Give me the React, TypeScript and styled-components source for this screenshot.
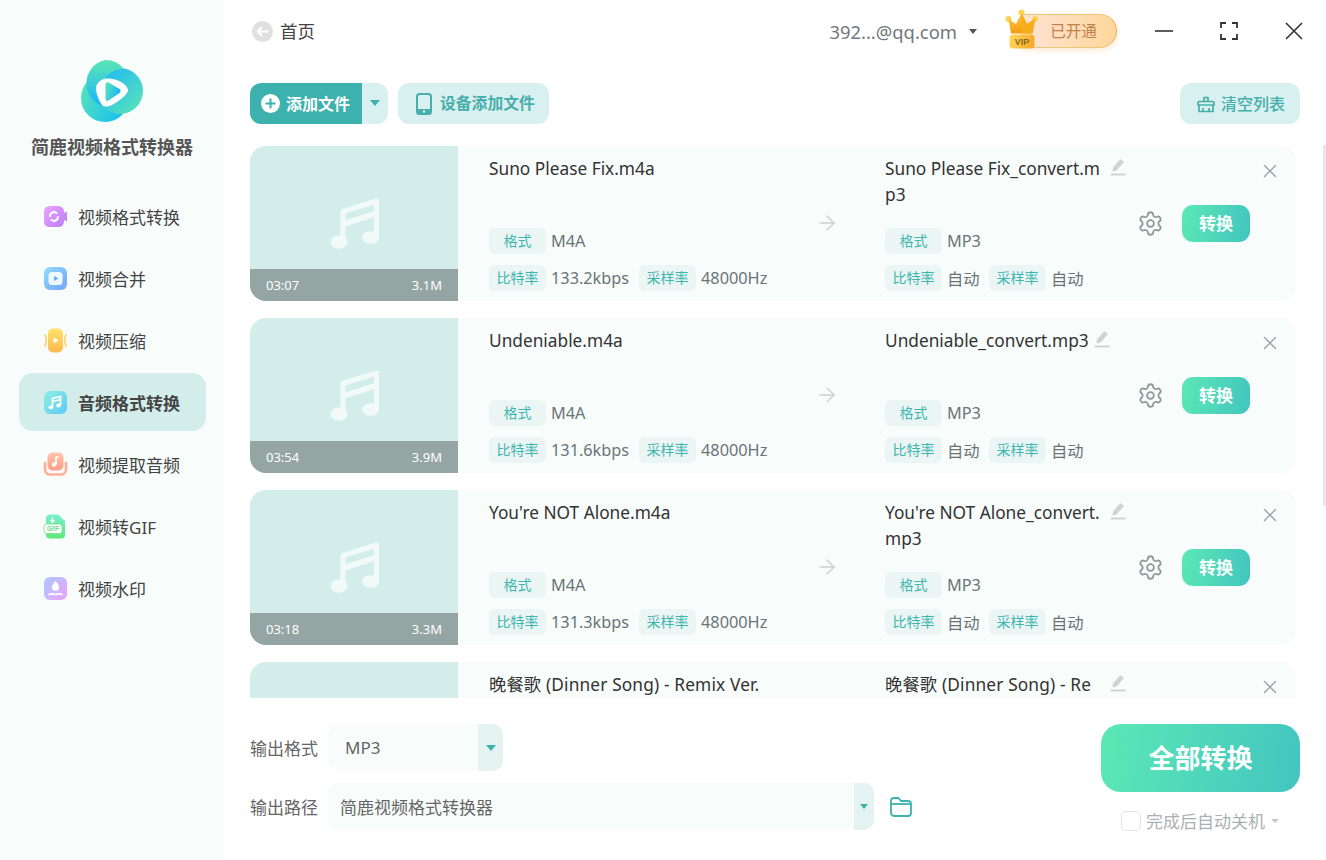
import React from "react";
import styled, { createGlobalStyle } from "styled-components";
import { ArrowRight, Settings, X } from "lucide-react";

const Global = createGlobalStyle`
  html, body { margin: 0; padding: 0; background: #fff; }
  body { font-family: "Noto Sans", "Noto Sans CJK SC", sans-serif; color: #333; overflow: hidden; }
  * { box-sizing: border-box; }
`;

const Page = styled.div`
  display: flex;
  width: 1326px;
  height: 860px;
  overflow: hidden;
  position: relative;
`;

const Sidebar = styled.aside`
  width: 224px;
  flex: none;
  background: #f8fcfb;
  display: flex;
  flex-direction: column;
  align-items: center;
  padding-top: 60px;
`;
const LogoMark = styled.svg`
  width: 62px;
  height: 62px;
  display: block;
`;
const AppName = styled.div`
  margin-top: 12px;
  font-size: 18px;
  line-height: 26px;
  font-weight: 700;
  color: #555;
`;
const Nav = styled.nav`
  margin-top: 27px;
  width: 187px;
  margin-left: 1px;
  display: flex;
  flex-direction: column;
  gap: 4px;
`;
const NavItem = styled.div<{ $active?: boolean }>`
  height: 58px;
  display: flex;
  align-items: center;
  gap: 10px;
  padding-left: 24px;
  border-radius: 14px;
  font-size: 17px;
  color: #444;
  font-weight: ${(p) => (p.$active ? 700 : 400)};
  background: ${(p) => (p.$active ? "#d3edeb" : "transparent")};
`;
const NavIcon = styled.svg`
  width: 25px;
  height: 25px;
  flex: none;
  display: block;
`;

const Main = styled.main`
  flex: 1;
  min-width: 0;
  display: flex;
  flex-direction: column;
  padding: 0 26px;
`;

const Header = styled.header`
  height: 62px;
  flex: none;
  display: flex;
  align-items: center;
  margin-right: -3px;
  padding-left: 2px;
`;
const BackCircle = styled.span`
  width: 21px;
  height: 21px;
  border-radius: 50%;
  background: #e0e0e0;
  display: flex;
  align-items: center;
  justify-content: center;
`;
const HomeLabel = styled.span`
  margin-left: 7px;
  padding-bottom: 2px;
  font-size: 17.5px;
  color: #444;
`;
const Spacer = styled.div`
  flex: 1;
`;
const Email = styled.span`
  font-size: 18.4px;
  color: #71787b;
`;
const Caret = styled.span<{ $color?: string; $w?: number; $h?: number }>`
  display: block;
  flex: none;
  width: 0;
  height: 0;
  border-left: ${(p) => p.$w ?? 5}px solid transparent;
  border-right: ${(p) => p.$w ?? 5}px solid transparent;
  border-top: ${(p) => p.$h ?? 6}px solid ${(p) => p.$color ?? "#555"};
`;
const EmailCaret = styled(Caret)`
  margin-left: 12px;
`;
const VipWrap = styled.div`
  margin-left: 28px;
  position: relative;
  width: 112px;
  height: 36px;
  display: flex;
  align-items: center;
  justify-content: flex-end;
`;
const VipPill = styled.div`
  width: 94px;
  height: 34px;
  border-radius: 0 17px 17px 0;
  background: linear-gradient(90deg, #fde3d4, #fed79b);
  border: 1.5px solid #e9c877;
  border-right-color: #f6a95f;
  border-left: none;
  box-shadow: 0 2px 6px rgba(250, 190, 110, 0.35);
  display: flex;
  align-items: center;
  justify-content: center;
  padding-left: 8px;
  padding-bottom: 2px;
  font-size: 15.5px;
  color: #c0814f;
`;
const Crown = styled.svg`
  position: absolute;
  left: 0;
  top: -5px;
  width: 36px;
  height: 42px;
`;
const WinControls = styled.div`
  margin-left: 38px;
  display: flex;
  align-items: center;
  gap: 47px;
`;
const WinIcon = styled.svg`
  width: 18px;
  height: 18px;
  display: block;
`;

const Toolbar = styled.div`
  margin-top: 21px;
  height: 41px;
  flex: none;
  display: flex;
  align-items: stretch;
  gap: 10px;
`;
const AddGroup = styled.div`
  display: flex;
  border-radius: 11px;
  overflow: hidden;
`;
const AddButton = styled.div`
  width: 112px;
  background: #3db1ae;
  color: #fff;
  display: flex;
  align-items: center;
  padding-left: 11px;
  gap: 6px;
  font-size: 16px;
  font-weight: 700;
`;
const AddLabel = styled.span`
  padding-bottom: 2px;
`;
const AddCaret = styled.div`
  width: 26px;
  background: #d8f0ef;
  display: flex;
  align-items: center;
  justify-content: center;
  padding-bottom: 2px;
`;
const LightButton = styled.div`
  background: #d8f0ef;
  color: #47aeab;
  border-radius: 11px;
  display: flex;
  align-items: center;
  gap: 8px;
  padding: 0 14px 0 18px;
  font-size: 15.8px;
  font-weight: 700;
`;
const ClearButton = styled(LightButton)`
  margin-left: auto;
  font-size: 16px;
  font-weight: 500;
  padding: 0 15px 0 17px;
  gap: 6px;
`;

const List = styled.div`
  margin-top: 22px;
  height: 552px;
  flex: none;
  overflow: hidden;
  display: flex;
  flex-direction: column;
  gap: 17px;
  padding-right: 3px;
`;
const Card = styled.article`
  position: relative;
  height: 155px;
  flex: none;
  display: flex;
  background: #f8fcfb;
  border-radius: 16px;
  overflow: hidden;
`;
const Thumb = styled.div`
  width: 208px;
  flex: none;
  background: #d3edeb;
  display: flex;
  flex-direction: column;
`;
const ThumbArt = styled.div`
  flex: 1;
  display: flex;
  align-items: center;
  justify-content: center;
  padding: 30px 0 0 4px;
`;
const ThumbBar = styled.div`
  height: 32px;
  background: #95a5a4;
  display: flex;
  align-items: center;
  justify-content: space-between;
  padding: 0 16px;
  color: #fff;
  font-size: 13px;
`;
const FileCol = styled.div<{ $w: number; $pl?: number }>`
  width: ${(p) => p.$w}px;
  padding: 10px 0 10px ${(p) => p.$pl ?? 0}px;
  flex: none;
  display: flex;
  flex-direction: column;
`;
const TitleRow = styled.div`
  display: flex;
  align-items: flex-start;
  gap: 5px;
`;
const Title = styled.div<{ $max: number }>`
  max-width: ${(p) => p.$max}px;
  font-size: 17.3px;
  line-height: 26px;
  color: #333;
  word-break: break-all;
`;
const LongTitle = styled(Title)`
  width: ${(p) => p.$max}px;
  letter-spacing: 0.15px;
`;
const Pencil = styled.svg`
  width: 16px;
  height: 18px;
  flex: none;
  display: block;
  margin-top: 2px;
`;
const Specs = styled.div`
  margin-top: auto;
  display: flex;
  flex-direction: column;
  gap: 11px;
`;
const SpecRow = styled.div`
  display: flex;
  align-items: center;
  height: 26px;
`;
const Tag = styled.span`
  width: 57px;
  height: 26px;
  flex: none;
  border-radius: 6px;
  background: #ebf6f4;
  color: #3fb5b0;
  font-size: 14px;
  padding-bottom: 2px;
  display: flex;
  align-items: center;
  justify-content: center;
`;
const Value = styled.span<{ $w?: number }>`
  margin-left: 5px;
  padding-bottom: 1px;
  font-size: 16.3px;
  color: #6a7477;
  ${(p) => (p.$w ? `width: ${p.$w}px;` : "")}
`;
const ArrowCol = styled.div`
  width: 36px;
  flex: none;
  margin-right: 40px;
  padding-bottom: 2px;
  display: flex;
  align-items: center;
  justify-content: center;
  color: #c9d0cf;
`;
const Actions = styled.div`
  margin-left: 11px;
  flex: none;
  display: flex;
  align-items: center;
  gap: 18px;
  color: #8f9a99;
`;
const ConvertBtn = styled.div`
  width: 68px;
  height: 37px;
  border-radius: 11px;
  background: linear-gradient(100deg, #5ce8b5, #42c5c0);
  color: #fff;
  font-size: 17px;
  font-weight: 700;
  padding-bottom: 2px;
  display: flex;
  align-items: center;
  justify-content: center;
`;
const CloseBtn = styled.div`
  position: absolute;
  top: 14px;
  right: 16px;
  color: #9aa3a3;
  display: flex;
`;

const Bottom = styled.div`
  margin-top: 26px;
  display: flex;
  justify-content: space-between;
  align-items: flex-start;
`;
const OutputCol = styled.div`
  display: flex;
  flex-direction: column;
  gap: 12px;
`;
const OutputRow = styled.div`
  display: flex;
  align-items: center;
  height: 47px;
`;
const OutputLabel = styled.span`
  width: 78px;
  flex: none;
  font-size: 17px;
  color: #666;
`;
const SelectBox = styled.div<{ $w: number; $pl: number }>`
  width: ${(p) => p.$w}px;
  height: 47px;
  background: #f8fcfb;
  border-radius: 10px;
  overflow: hidden;
  display: flex;
  align-items: center;
  justify-content: space-between;
  padding-left: ${(p) => p.$pl}px;
  font-size: 17px;
  color: #666;
`;
const SelectCaret = styled.div<{ $w: number }>`
  width: ${(p) => p.$w}px;
  align-self: stretch;
  background: #e4f3f1;
  display: flex;
  align-items: center;
  justify-content: center;
`;
const FolderIcon = styled.svg`
  margin-left: 16px;
  width: 22px;
  height: 20px;
  display: block;
`;
const RunCol = styled.div`
  display: flex;
  flex-direction: column;
  width: 199px;
`;
const RunAll = styled.div`
  height: 68px;
  border-radius: 20px;
  background: linear-gradient(100deg, #5ce8b5, #42c5c0);
  color: #fff;
  font-size: 26px;
  font-weight: 700;
  padding-bottom: 2px;
  display: flex;
  align-items: center;
  justify-content: center;
`;
const AutoOff = styled.div`
  margin-top: 16px;
  padding-left: 20px;
  display: flex;
  align-items: center;
  font-size: 17px;
  color: #aab0b3;
`;
const Check = styled.span`
  width: 20px;
  height: 20px;
  border: 1px solid #e2e4e6;
  border-radius: 5px;
  background: #fff;
  margin-right: 5px;
`;
const AutoCaret = styled(Caret)`
  margin-left: 6px;
`;
const ScrollThumb = styled.div`
  position: absolute;
  right: 0;
  top: 145px;
  width: 3px;
  height: 361px;
  background: #e6e6e6;
`;

const Grad = ({ id, a, b, x2 = 1, y2 = 1 }: { id: string; a: string; b: string; x2?: number; y2?: number }) => (
  <linearGradient id={id} x1="0" y1="0" x2={x2} y2={y2}>
    <stop offset="0" stopColor={a} />
    <stop offset="1" stopColor={b} />
  </linearGradient>
);

const Logo = () => (
  <LogoMark viewBox="0 0 62 62">
    <defs>
      <Grad id="lgA" a="#5ce6b4" b="#17b3fb" x2={0} />
      <Grad id="lgB" a="#1cb4fb" b="#5ce6b4" />
      <Grad id="lgC" a="#5ce6b4" b="#1cc0f0" x2={1} y2={0.4} />
      <Grad id="lgP" a="#5ce6b4" b="#18b5fb" x2={1} y2={0.3} />
    </defs>
    <circle cx="24" cy="38" r="24" fill="url(#lgC)" />
    <circle cx="39" cy="31" r="23" fill="url(#lgB)" />
    <path d="M24 0a24 24 0 0 1 19 9 23 23 0 0 0-18 38 24 24 0 0 1-1-47z" fill="url(#lgA)" />
    <path d="M23 19c3-1 9 0 13 1 5 2 12 7 11 11-1 3-8 10-16 14-5 2-8 2-10 0-3-4-6-12-6-17 0-4 4-8 8-9z" fill="#fff" />
    <path d="M24.500 24.500c0-1.500 1.500-2.500 3-2l11 6.500c1.500 1 1.500 3 0 4l-11 7.500c-1.500 1-3 0-3-2z" fill="url(#lgP)" />
  </LogoMark>
);

const icons: Record<string, React.ReactNode> = {
  convert: (
    <NavIcon viewBox="0 0 25 25">
      <defs><Grad id="n1" a="#eea4ff" b="#bd7df7" /></defs>
      <rect x="1" y="2" width="20" height="21" rx="5.500" fill="url(#n1)" />
      <path d="M21 9l3-1.500v10L21 16z" fill="#c58af8" />
      <path d="M7 12a4 4 0 0 1 6.500-3M15 13a4 4 0 0 1-6.500 3" fill="none" stroke="#fff" strokeWidth="2" strokeLinecap="round" />
    </NavIcon>
  ),
  merge: (
    <NavIcon viewBox="0 0 25 25">
      <defs><Grad id="n2" a="#8fdcfd" b="#72a4fb" /></defs>
      <rect x="1" y="1" width="23" height="23" rx="6" fill="url(#n2)" />
      <rect x="5.500" y="6" width="14" height="13" rx="3.500" fill="#eef8ff" />
      <path d="M11 10l4.500 2.500L11 15z" fill="#6fa8fb" />
    </NavIcon>
  ),
  compress: (
    <NavIcon viewBox="0 0 25 25">
      <defs><Grad id="n3" a="#ffe26c" b="#ffb94f" x2={0} /></defs>
      <rect x="5" y="0.500" width="15" height="24" rx="5" fill="url(#n3)" />
      <path d="M10.500 9.500l5 3-5 3z" fill="#fff" />
      <path d="M2 7c1.500 3 1.500 8 0 11M23 7c-1.500 3-1.500 8 0 11" fill="none" stroke="#ffd26a" strokeWidth="1.800" strokeLinecap="round" />
    </NavIcon>
  ),
  audio: (
    <NavIcon viewBox="0 0 25 25">
      <defs><Grad id="n4" a="#90f0de" b="#5cc8fb" /></defs>
      <rect x="1" y="1" width="23" height="23" rx="6" fill="url(#n4)" />
      <path d="M9.500 17V8.500l8-2V15M9.500 11.500l8-2" fill="none" stroke="#fff" strokeWidth="1.700" />
      <ellipse cx="7.800" cy="17.300" rx="2.300" ry="1.900" fill="#fff" />
      <ellipse cx="15.500" cy="15.500" rx="2.300" ry="1.900" fill="#fff" />
    </NavIcon>
  ),
  extract: (
    <NavIcon viewBox="0 0 25 25">
      <defs><Grad id="n5" a="#ffc4b0" b="#ff9f85" x2={0} /></defs>
      <rect x="4.500" y="0.500" width="16" height="18" rx="5" fill="url(#n5)" />
      <path d="M13 5v7.500" stroke="#fff" strokeWidth="1.800" fill="none" />
      <path d="M13 5h2.500" stroke="#fff" strokeWidth="1.800" />
      <circle cx="11" cy="12.500" r="2.200" fill="#fff" />
      <path d="M2 11v6.500a5 5 0 0 0 5 5h11a5 5 0 0 0 5-5V11" fill="none" stroke="#ffae97" strokeWidth="2.600" strokeLinecap="round" />
    </NavIcon>
  ),
  gif: (
    <NavIcon viewBox="0 0 25 25">
      <defs><Grad id="n6" a="#78f0d0" b="#5ee878" x2={0} /></defs>
      <path d="M3 4.500a4 4 0 0 1 4-4h8l7 6.500v14a3.500 3.500 0 0 1-3.500 3.500H7a4 4 0 0 1-4-4z" fill="url(#n6)" />
      <path d="M9.500 3.500v4M7.500 6l2 2.500 2-2.500" stroke="#fff" strokeWidth="1.300" fill="none" />
      <rect x="1" y="10" width="18" height="9.500" rx="2.500" fill="#fff" stroke="#6fe08a" strokeWidth="0.800" />
      <text x="10" y="17.400" textAnchor="middle" fontSize="7.500" fontWeight="700" fill="#6bdc8c" fontFamily="Liberation Sans, sans-serif">GIF</text>
    </NavIcon>
  ),
  mark: (
    <NavIcon viewBox="0 0 25 25">
      <defs><Grad id="n7" a="#abc8ff" b="#eca2fb" /></defs>
      <rect x="1" y="1" width="23" height="23" rx="6" fill="url(#n7)" />
      <path d="M12.500 5c2.200 2.500 3.500 4.300 3.500 6.200a3.500 3.500 0 0 1-7 0C9 9.300 10.300 7.500 12.500 5z" fill="#fff" />
      <path d="M6 18.500c3-1.500 4.500 0 6.500 0s3.500-1.500 6.500 0" fill="none" stroke="#fff" strokeWidth="1.700" strokeLinecap="round" />
    </NavIcon>
  ),
};

const navItems = [
  ["convert", "视频格式转换"],
  ["merge", "视频合并"],
  ["compress", "视频压缩"],
  ["audio", "音频格式转换"],
  ["extract", "视频提取音频"],
  ["gif", "视频转GIF"],
  ["mark", "视频水印"],
];

const MusicArt = () => (
  <svg width="54" height="56" viewBox="0 0 54 56" fill="none">
    <path d="M14 46V16.500L47.500 6v36" stroke="#f1faf8" strokeWidth="5" strokeLinejoin="round" />
    <path d="M14 29l33.500-10.500" stroke="#f1faf8" strokeWidth="6" />
    <ellipse cx="10" cy="47" rx="8.500" ry="6.800" fill="#f1faf8" />
    <ellipse cx="41.500" cy="42.500" rx="8.500" ry="6.300" fill="#f1faf8" />
  </svg>
);

const PencilIcon = () => (
  <Pencil viewBox="0 0 16 18">
    <path d="M10.500 1l3.500 3-7.500 8.500-4 1 .5-4z" fill="#cfd3d3" />
    <rect x="0.500" y="15.500" width="15" height="2" rx="1" fill="#cfd3d3" />
  </Pencil>
);

const files = [
  { name: "Suno Please Fix.m4a", out: "Suno Please Fix_convert.mp3", time: "03:07", size: "3.1M", rate: "133.2kbps" },
  { name: "Undeniable.m4a", out: "Undeniable_convert.mp3", time: "03:54", size: "3.9M", rate: "131.6kbps" },
  { name: "You're NOT Alone.m4a", out: "You're NOT Alone_convert.mp3", time: "03:18", size: "3.3M", rate: "131.3kbps" },
];

export default function App() {
  return (
    <Page>
      <Global />
      <Sidebar>
        <Logo />
        <AppName>简鹿视频格式转换器</AppName>
        <Nav>
          {navItems.map(([k, label]) => (
            <NavItem key={k} $active={k === "audio"}>
              {icons[k]}
              {label}
            </NavItem>
          ))}
        </Nav>
      </Sidebar>
      <Main>
        <Header>
          <BackCircle>
            <svg width="13" height="13" viewBox="0 0 13 13" fill="none" stroke="#fff" strokeWidth="1.800" strokeLinecap="round" strokeLinejoin="round">
              <path d="M11.500 6.500h-10M5.500 2.500l-4 4 4 4" />
            </svg>
          </BackCircle>
          <HomeLabel>首页</HomeLabel>
          <Spacer />
          <Email>392...@qq.com</Email>
          <EmailCaret $w={4.500} $h={5} />
          <VipWrap>
            <VipPill>已开通</VipPill>
            <Crown viewBox="0 0 36 42">
              <defs>
                <Grad id="cr" a="#ffd23f" b="#f59a10" x2={0.3} />
                <Grad id="vp" a="#ffdc60" b="#f9a92c" x2={1} y2={0.2} />
              </defs>
              <circle cx="3.500" cy="11" r="3" fill="#fcd250" />
              <circle cx="16.500" cy="4.500" r="3" fill="#fcd250" />
              <circle cx="30" cy="11" r="3" fill="#fcd250" />
              <path d="M3.500 11l7.500 5 5.500-11 5.500 11 8.500-5-3 14.500H6z" fill="url(#cr)" />
              <path d="M16.500 5l5.500 11 8-5-3 14.500H16.500z" fill="#f7ae1b" />
              <rect x="4.500" y="26.500" width="25" height="14" rx="3.500" fill="url(#vp)" />
              <text x="17" y="37" textAnchor="middle" fontSize="9" fontWeight="700" fill="#8a6a1c" fontFamily="Liberation Sans, sans-serif">VIP</text>
            </Crown>
          </VipWrap>
          <WinControls>
            <WinIcon viewBox="0 0 18 18"><path d="M0 9h18" stroke="#333" strokeWidth="1.600" /></WinIcon>
            <WinIcon viewBox="0 0 18 18" fill="none" stroke="#333" strokeWidth="1.800"><path d="M1 6V1h5M12 1h5v5M17 12v5h-5M6 17H1v-5" /></WinIcon>
            <WinIcon viewBox="0 0 18 18" fill="none" stroke="#333" strokeWidth="1.600"><path d="M1 1l16 16M17 1L1 17" /></WinIcon>
          </WinControls>
        </Header>
        <Toolbar>
          <AddGroup>
            <AddButton>
              <svg width="19" height="19" viewBox="0 0 19 19">
                <circle cx="9.500" cy="9.500" r="9.500" fill="#fff" />
                <path d="M9.500 4.500v10M4.500 9.500h10" stroke="#3db1ae" strokeWidth="2" />
              </svg>
              <AddLabel>添加文件</AddLabel>
            </AddButton>
            <AddCaret><Caret $color="#3db1ae" /></AddCaret>
          </AddGroup>
          <LightButton>
            <svg width="16" height="22" viewBox="0 0 16 22">
              <rect x="1" y="1" width="14" height="20" rx="2.500" fill="none" stroke="#47aeab" strokeWidth="2" />
              <rect x="1" y="16" width="14" height="5" fill="#47aeab" />
              <circle cx="8" cy="18.500" r="1.200" fill="#d8f0ef" />
            </svg>
            <AddLabel>设备添加文件</AddLabel>
          </LightButton>
          <ClearButton>
            <svg width="18" height="18" viewBox="0 0 18 18" fill="none" stroke="#47aeab" strokeWidth="1.700" strokeLinejoin="round">
              <path d="M7 6.500V2.500h4v4M1 10V8a1.500 1.500 0 0 1 1.500-1.500h13A1.500 1.500 0 0 1 17 8v2z" />
              <path d="M2 10v6.500h14V10M6 13v3.500M12 13v3.500" />
            </svg>
            <AddLabel>清空列表</AddLabel>
          </ClearButton>
        </Toolbar>
        <List>
          {files.map((f) => (
            <Card key={f.name}>
              <Thumb>
                <ThumbArt><MusicArt /></ThumbArt>
                <ThumbBar><span>{f.time}</span><span>{f.size}</span></ThumbBar>
              </Thumb>
              <FileCol $w={351} $pl={31}>
                <Title $max={280}>{f.name}</Title>
                <Specs>
                  <SpecRow><Tag>格式</Tag><Value>M4A</Value></SpecRow>
                  <SpecRow>
                    <Tag>比特率</Tag><Value $w={88}>{f.rate}</Value>
                    <Tag>采样率</Tag><Value>48000Hz</Value>
                  </SpecRow>
                </Specs>
              </FileCol>
              <ArrowCol><ArrowRight size={24} strokeWidth={1.4} /></ArrowCol>
              <FileCol $w={241}>
                <TitleRow>
                  <Title $max={220}>{f.out}</Title>
                  <PencilIcon />
                </TitleRow>
                <Specs>
                  <SpecRow><Tag>格式</Tag><Value>MP3</Value></SpecRow>
                  <SpecRow>
                    <Tag>比特率</Tag><Value $w={42}>自动</Value>
                    <Tag>采样率</Tag><Value>自动</Value>
                  </SpecRow>
                </Specs>
              </FileCol>
              <Actions>
                <Settings size={27} strokeWidth={1.6} />
                <ConvertBtn>转换</ConvertBtn>
              </Actions>
              <CloseBtn><X size={22} strokeWidth={1.5} /></CloseBtn>
            </Card>
          ))}
          <Card>
            <Thumb />
            <FileCol $w={351} $pl={31}>
              <LongTitle $max={290}>晚餐歌 (Dinner Song) - Remix Ver.</LongTitle>
            </FileCol>
            <ArrowCol />
            <FileCol $w={241}>
              <TitleRow>
                <LongTitle $max={220}>晚餐歌 (Dinner Song) - Re</LongTitle>
                <PencilIcon />
              </TitleRow>
            </FileCol>
            <CloseBtn><X size={22} strokeWidth={1.5} /></CloseBtn>
          </Card>
        </List>
        <Bottom>
          <OutputCol>
            <OutputRow>
              <OutputLabel>输出格式</OutputLabel>
              <SelectBox $w={175} $pl={17}>
                MP3
                <SelectCaret $w={25}><Caret $color="#3db1ae" /></SelectCaret>
              </SelectBox>
            </OutputRow>
            <OutputRow>
              <OutputLabel>输出路径</OutputLabel>
              <SelectBox $w={546} $pl={12}>
                简鹿视频格式转换器
                <SelectCaret $w={20}><Caret $color="#3db1ae" $w={4} $h={5} /></SelectCaret>
              </SelectBox>
              <FolderIcon viewBox="0 0 22 20" fill="none" stroke="#3db1ae" strokeWidth="1.800" strokeLinejoin="round">
                <path d="M1 4a3 3 0 0 1 3-3h4.500l2.500 3h7a3 3 0 0 1 3 3v9a3 3 0 0 1-3 3H4a3 3 0 0 1-3-3z" />
                <path d="M1 7h20" />
              </FolderIcon>
            </OutputRow>
          </OutputCol>
          <RunCol>
            <RunAll>全部转换</RunAll>
            <AutoOff>
              <Check />
              完成后自动关机
              <AutoCaret $color="#c4c8ca" $w={4.500} $h={4} />
            </AutoOff>
          </RunCol>
        </Bottom>
      </Main>
      <ScrollThumb />
    </Page>
  );
}
